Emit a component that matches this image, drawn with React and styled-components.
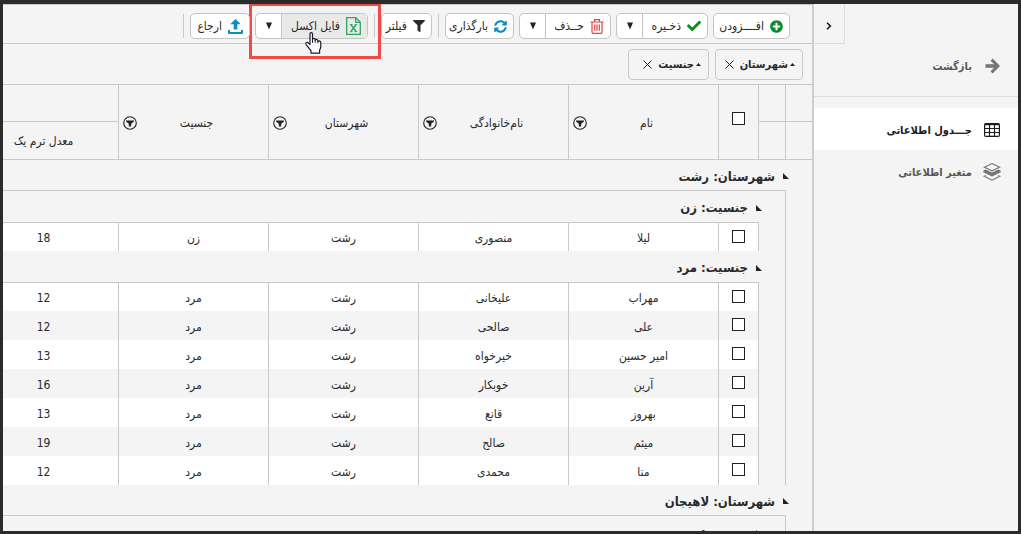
import React from "react";
import styled, { createGlobalStyle, css } from "styled-components";
import { FaPlusCircle, FaCheck, FaFilter, FaSyncAlt } from "react-icons/fa";

const line = "#c9c9c9";
const ink = "#2b2b2b";

const Global = createGlobalStyle`
  *, *::before, *::after { box-sizing: border-box; }
  html, body, #root { height: 100%; }
  body { margin: 0; background: #2b2b2b; color: ${ink}; overflow: hidden;
    font-family: "DejaVu Sans Condensed", "DejaVu Sans", sans-serif; font-size: 12px; }
  button { font: inherit; color: inherit; }
  svg { display: block; flex: none; }
`;

const Frame = styled.div`
  display: flex;
  height: 100vh;
  border: solid #2b2b2b;
  border-width: 4px 3px 3px;
  background: #f4f4f4;
  overflow: hidden;
`;
const Main = styled.main`
  position: relative;
  flex: 1;
  min-width: 0;
  display: flex;
  flex-direction: column;
  border-top: 1px solid ${line};
`;
const LoadBar = styled.div`
  position: absolute;
  top: -2px;
  right: 122px;
  width: 190px;
  height: 1px;
  background: #1a7fa8;
`;
const Side = styled.aside`
  flex: none;
  width: 206px;
  border-left: 2px solid #cdcdcd;
`;
const Collapse = styled.button`
  display: flex;
  align-items: center;
  justify-content: center;
  width: 31px;
  height: 40px;
  margin-right: auto;
  padding: 4px 0 0;
  border: solid #dedede;
  border-width: 0 1px 1px 0;
  background: none;
`;
const Nav = styled.nav`
  display: flex;
  flex-direction: column;
`;
const NavLink = styled.a`
  display: flex;
  align-items: center;
  gap: 10px;
  height: 42px;
  padding: 2px 16px 0 0;
  color: #585858;
  font-size: 11px;
  font-weight: 700;
  text-decoration: none;
  ${(p) => p.$current && css`background: #fff; color: #1d1d1d;`}
  ${(p) => p.$back && css`
    height: 53px;
    margin-bottom: 11px;
    padding-bottom: 10px;
    border-bottom: 1px solid #dedede;
  `}
`;
const NavIcon = styled.span`
  display: flex;
  justify-content: center;
  width: 20px;
  color: ${(p) => (p.$dark ? "#1d1d1d" : "#757575")};
`;

const Toolbar = styled.div`
  display: flex;
  align-items: center;
  gap: 5px;
  padding: 8px 22px 4px;
  border-bottom: 1px solid ${line};
`;
const Divider = styled.span`
  width: 1px;
  height: 24px;
  margin: 0 1px;
  background: ${line};
`;
const ButtonGroup = styled.div`
  position: relative;
  display: flex;
  width: ${(p) => p.$width}px;
  height: 26px;
  border: 1px solid #c4c4c4;
  border-radius: 5px;
  background: #fff;
`;
const Action = styled.button`
  flex: 1;
  display: flex;
  align-items: center;
  gap: 6px;
  padding: 0 6px 0 0;
  border: 0;
  border-radius: 0 4px 4px 0;
  background: ${(p) => (p.$hover ? "#e9e9e9" : "transparent")};
  white-space: nowrap;
`;
const Drop = styled.button`
  display: flex;
  align-items: center;
  justify-content: center;
  width: 26px;
  padding: 0;
  border: 0;
  border-right: 1px solid #c4c4c4;
  background: none;
`;
const Highlight = styled.span`
  position: absolute;
  inset: -11px -14px -21px -7px;
  border: 3px solid #ef4b46;
  pointer-events: none;
`;
const Pointer = styled.svg`
  position: absolute;
  top: 18px;
  left: 49px;
  pointer-events: none;
`;

const GroupBar = styled.div`
  display: flex;
  align-items: center;
  gap: 6px;
  height: 41px;
  padding: 0 9px;
  border-bottom: 1px solid ${line};
`;
const Chip = styled.div`
  display: flex;
  align-items: center;
  gap: 2px;
  width: ${(p) => p.$width}px;
  height: 31px;
  padding: 0 7px;
  border: 1px solid ${line};
  border-radius: 4px;
  font-size: 11px;
  font-weight: 700;
`;
const ChipClose = styled.button`
  display: flex;
  margin: 0 2px 0 0;
  padding: 2px;
  border: 0;
  background: none;
`;

const Viewport = styled.div`
  flex: 1;
  min-height: 0;
  overflow: hidden;
`;
const Grid = styled.table`
  width: 100%;
  min-width: 844px;
  table-layout: fixed;
  border-collapse: separate;
  border-spacing: 0;
`;
const Col = styled.col`
  width: ${(p) => p.$w}px;
`;
const Th = styled.th`
  height: ${(p) => p.$h || 37}px;
  padding: ${(p) => (p.$check ? "0 0 4px" : "0")};
  border: solid ${line};
  border-width: 0 0 1px 1px;
  font-weight: 400;
`;
const HeadCell = styled.div`
  display: flex;
  align-items: center;
  padding: 2px 0 0 4px;
`;
const HeadText = styled.span`
  flex: 1;
  padding-right: 12px;
  text-align: center;
`;
const FilterButton = styled.button`
  display: flex;
  padding: 0;
  border: 0;
  background: none;
`;
const Td = styled.td`
  height: 29px;
  padding: 2px 0 0;
  border-left: 1px solid ${line};
  text-align: center;
  background: ${(p) => (p.$odd ? "#f4f4f4" : "#fff")};
  ${(p) => p.$first && css`border-top: 1px solid ${line};`}
`;
const Indent = styled.td`
  padding: 0;
  border-left: 1px solid ${line};
`;
const GroupCell = styled.td`
  height: ${(p) => p.$h}px;
  padding: 2px 23px 0 0;
  ${(p) => p.$top && css`border-top: 1px solid ${line};`}
`;
const GroupLabel = styled.div`
  display: flex;
  align-items: center;
  gap: 8px;
  font-size: 13px;
  font-weight: 700;
`;
const Check = styled.input`
  appearance: none;
  display: block;
  width: 13px;
  height: 13px;
  margin: 0 auto 4px;
  border: 1px solid #222;
  background: #fff;
`;

const Caret = () => (
  <svg width="8" height="8" viewBox="0 0 8 8"><path d="M1 0.5h6L4 7.5z" fill="#222" /></svg>
);
const Corner = () => (
  <svg width="6" height="6" viewBox="0 0 6 6"><path d="M0 0v6h6z" fill="#222" /></svg>
);
const ArrowIcon = () => (
  <svg width="15" height="16" viewBox="0 0 15 16" fill="none" stroke="currentColor">
    <path d="M0.5 8H12" strokeWidth="3.6" />
    <path d="M6.6 1.6L13 8 6.6 14.4" strokeWidth="3" />
  </svg>
);
const TrashIcon = () => (
  <svg width="14" height="15" viewBox="0 0 14 15" fill="none" stroke="#dd4540" strokeWidth="1.2">
    <path d="M0.5 3h13M4.5 3V0.7h5V3M2 3v9.9q0 1.4 1.4 1.4h7.2q1.4 0 1.4-1.4V3M4.7 5.5v6.2M7 5.5v6.2M9.3 5.5v6.2" />
  </svg>
);
const ExcelIcon = () => (
  <svg width="15" height="18" viewBox="0 0 15 18" fill="none" stroke="#2fa663" strokeWidth="1.3">
    <path d="M0.7 0.7h9.1L14.3 5.2v12.1H0.7z" />
    <path d="M9.7 0.8v4.5h4.5" />
    <path d="M5 7.8l5 6.6M10 7.8l-5 6.6" strokeWidth="1.5" />
    <path d="M3.9 7.6h2.6M8.6 7.6h2.5M3.9 14.6h2.5M8.5 14.6h2.6" strokeWidth="1" />
  </svg>
);
const UploadIcon = () => (
  <svg width="15" height="15" viewBox="0 0 15 15" fill="#0d8cc2">
    <path d="M7.5 0L12.8 5.3H9.3V10.4H5.7V5.3H2.2z" />
    <path d="M0 11h2v2h11v-2h2v2.7q0 1.3-1.3 1.3H1.3Q0 15 0 13.7z" />
  </svg>
);
const FilterMark = () => (
  <svg width="14" height="14" viewBox="0 0 14 14">
    <circle cx="7" cy="7" r="6.3" fill="none" stroke="#222" strokeWidth="1.1" />
    <path d="M3 4.5h8v1L8.2 7.8V10.5H5.8V7.8L3 5.5z" fill="#222" />
  </svg>
);
const TableIcon = () => (
  <svg width="16" height="14" viewBox="0 0 16 14" fill="none" stroke="currentColor">
    <rect x="0.6" y="0.6" width="14.8" height="12.8" rx="1.2" strokeWidth="1.2" />
    <path d="M1 1.2h14" strokeWidth="2" />
    <path d="M1 5.5h14M1 9.5h14M5.5 2v11M10.5 2v11" strokeWidth="1.2" />
  </svg>
);
const LayersIcon = () => (
  <svg width="18" height="18" viewBox="0 0 18 18" fill="none" stroke="currentColor">
    <path d="M9 0.6l7.6 3.6L9 7.8 1.4 4.2z" strokeWidth="1.1" />
    <path d="M0.3 7.8L2.6 6.6 9 9.6 15.4 6.6l2.3 1.2v1.4L9 13.4 0.3 9.2z" fill="currentColor" stroke="none" />
    <path d="M2.8 12.4l-1.6 0.9L9 17.2l7.8-3.9-1.6-0.9" strokeWidth="1.1" />
  </svg>
);
const CloseIcon = () => (
  <svg width="9" height="9" viewBox="0 0 9 9" stroke="#222"><path d="M0.5 0.5l8 8M8.5 0.5l-8 8" /></svg>
);
const UpMark = () => (
  <svg width="5" height="3" viewBox="0 0 5 3"><path d="M0 3L2.5 0 5 3z" fill="#222" /></svg>
);
const HandPointer = () => (
  <Pointer width="18" height="22" viewBox="0 0 18 22">
    <path
      d="M5 1.9Q5 0.7 6.2 0.7T7.5 1.9V7.5Q7.6 6.4 8.8 6.4T10.2 7.6V8.4Q10.4 7.3 11.5 7.4T12.9 8.7V9.5Q13.2 8.7 14.2 8.8 15.8 9 15.8 10.7V14.5Q15.8 16.2 14.6 18V21.2H6V18.7L1.3 12.8Q0.4 11.4 1.3 10.6 2.4 9.9 3.6 11.1L5 12.6z"
      fill="#fff" stroke="#1b1b2b" strokeWidth="1.2" strokeLinejoin="round"
    />
    <path d="M7.5 7.5v3.4M10.2 8.4v2.5M12.9 9.5v1.9" stroke="#1b1b2b" />
  </Pointer>
);

const Split = ({ width, icon, label, drop, hover, children }) => (
  <ButtonGroup $width={width}>
    <Action type="button" $hover={hover}>
      {icon}
      <span>{label}</span>
    </Action>
    {drop && <Drop type="button" aria-label={label}><Caret /></Drop>}
    {children}
  </ButtonGroup>
);

const HeaderField = ({ label }) => (
  <Th rowSpan={2} $h={75} scope="col">
    <HeadCell>
      <HeadText>{label}</HeadText>
      <FilterButton type="button" aria-label={label}><FilterMark /></FilterButton>
    </HeadCell>
  </Th>
);

const DataRow = ({ row, first, odd }) => (
  <tr>
    <Indent />
    <Indent />
    <Td $first={first} $odd={odd}><Check type="checkbox" aria-label={row[0]} /></Td>
    {row.map((value, i) => <Td key={i} $first={first} $odd={odd}>{value}</Td>)}
  </tr>
);

const SubGroup = ({ label, first }) => (
  <tr>
    <Indent />
    <GroupCell colSpan={7} $h={first ? 32 : 31} $top={first}>
      <GroupLabel><Corner />{label}</GroupLabel>
    </GroupCell>
  </tr>
);

const City = ({ label }) => (
  <tr>
    <GroupCell colSpan={8} $h={30}>
      <GroupLabel><Corner />{label}</GroupLabel>
    </GroupCell>
  </tr>
);

const men = [
  ["مهراب", "علیخانی", "رشت", "مرد", "12"],
  ["علی", "صالحی", "رشت", "مرد", "12"],
  ["امیر حسین", "خیرخواه", "رشت", "مرد", "13"],
  ["آرین", "خوبکار", "رشت", "مرد", "16"],
  ["بهروز", "قانع", "رشت", "مرد", "13"],
  ["میثم", "صالح", "رشت", "مرد", "19"],
  ["منا", "محمدی", "رشت", "مرد", "12"],
];

export default function App() {
  return (
    <>
      <Global />
      <Frame dir="rtl">
        <Side>
          <Collapse type="button" aria-label="منو">
            <svg width="6" height="8" viewBox="0 0 6 8" fill="none" stroke="#111" strokeWidth="1.5"><path d="M1 0.8L4.4 4 1 7.2" /></svg>
          </Collapse>
          <Nav>
            <NavLink href="#back" $back><NavIcon><ArrowIcon /></NavIcon>بازگشت</NavLink>
            <NavLink href="#table" $current><NavIcon $dark><TableIcon /></NavIcon>جـــدول اطلاعاتی</NavLink>
            <NavLink href="#variables"><NavIcon><LayersIcon /></NavIcon>متغیر اطلاعاتی</NavLink>
          </Nav>
        </Side>
        <Main>
          <LoadBar />
          <Toolbar>
            <Split width={77} icon={<FaPlusCircle size={13} color="#0a8a2a" />} label="افــــزودن" />
            <Split width={92} icon={<FaCheck size={14} color="#0a8a1a" />} label="ذخـیره" drop />
            <Split width={92} icon={<TrashIcon />} label="حــذف" drop />
            <Split width={69} icon={<FaSyncAlt size={13} color="#0d8cc2" />} label="بارگذاری" />
            <Divider />
            <Split width={51} icon={<FaFilter size={12} color="#2b2b2b" />} label="فیلتر" />
            <Divider />
            <Split width={113} icon={<ExcelIcon />} label="فایل اکسل" drop hover>
              <Highlight />
              <HandPointer />
            </Split>
            <Split width={60} icon={<UploadIcon />} label="ارجاع" />
            <Divider />
          </Toolbar>
          <GroupBar>
            <Chip $width={88}><UpMark />شهرستان<ChipClose type="button" aria-label="حذف شهرستان"><CloseIcon /></ChipClose></Chip>
            <Chip $width={81}><UpMark />جنسیت<ChipClose type="button" aria-label="حذف جنسیت"><CloseIcon /></ChipClose></Chip>
          </GroupBar>
          <Viewport>
            <Grid>
              <colgroup>
                <Col $w={27} /><Col $w={27} /><Col $w={40} />
                <Col $w={150} /><Col $w={150} /><Col $w={150} /><Col $w={150} /><col />
              </colgroup>
              <thead>
                <tr>
                  <Th /><Th />
                  <Th rowSpan={2} $h={75} $check><Check type="checkbox" aria-label="انتخاب همه" /></Th>
                  <HeaderField label="نام" />
                  <HeaderField label="نام‌خانوادگی" />
                  <HeaderField label="شهرستان" />
                  <HeaderField label="جنسیت" />
                  <Th />
                </tr>
                <tr>
                  <Th $h={38} /><Th $h={38} />
                  <Th $h={38} scope="col">معدل ترم یک</Th>
                </tr>
              </thead>
              <tbody>
                <City label="شهرستان: رشت" />
                <SubGroup label="جنسیت: زن" first />
                <DataRow row={["لیلا", "منصوری", "رشت", "زن", "18"]} first />
                <SubGroup label="جنسیت: مرد" />
                {men.map((row, i) => <DataRow key={row[0]} row={row} first={i === 0} odd={i % 2 === 1} />)}
                <City label="شهرستان: لاهیجان" />
                <SubGroup label="جنسیت: زن" first />
              </tbody>
            </Grid>
          </Viewport>
        </Main>
      </Frame>
    </>
  );
}
